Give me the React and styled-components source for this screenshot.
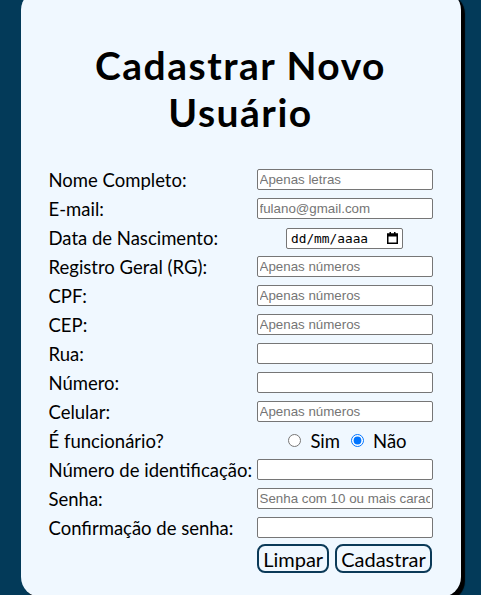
import styled, { createGlobalStyle } from 'styled-components';

const GlobalStyle = createGlobalStyle`
  html, body {
    margin: 0;
    padding: 0;
  }
  body {
    background-color: #033a59;
    font-family: Lato, "Open Sans", sans-serif;
  }
`;

const Page = styled.div`
  display: flex;
  justify-content: center;
`;

const Card = styled.div`
  width: 440px;
  margin-top: -10px;
  padding: 52px 0 24px;
  box-sizing: border-box;
  background-color: #f0f8ff;
  border-radius: 20px;
  box-shadow: 4px 4px 1px #000000;
  display: flex;
  flex-direction: column;
  align-items: center;
`;

const Title = styled.h1`
  margin: 0 0 29px;
  font-size: 39px;
  line-height: 47px;
  letter-spacing: 1.5px;
  font-weight: 700;
  text-align: center;
  color: #000000;
`;

const Table = styled.table`
  border-collapse: collapse;
`;

const LabelCell = styled.td`
  width: 204px;
  height: 29px;
  padding: 0 2px;
  font-size: 18.5px;
  color: #000000;
  white-space: nowrap;
  vertical-align: middle;
`;

const FieldCell = styled.td`
  width: 176px;
  height: 29px;
  padding: 0 2px;
  text-align: center;
  vertical-align: middle;
`;

const TextInput = styled.input`
  display: block;
  width: 176px;
  height: 21px;
  box-sizing: border-box;
  padding: 1px 2px;
  border: 1px solid #767676;
  border-radius: 2px;
  background: #ffffff;
  font-family: Arial, "Liberation Sans", sans-serif;
  font-size: 13.33px;
  &::placeholder {
    color: #757575;
  }
`;

const DateBox = styled.label`
  display: inline-flex;
  align-items: center;
  width: 117px;
  height: 21px;
  box-sizing: border-box;
  padding: 0 4px 0 4px;
  border: 1px solid #767676;
  border-radius: 2px;
  background: #ffffff;
  vertical-align: middle;
`;

const DateText = styled.input`
  flex: 1;
  min-width: 0;
  padding: 0;
  border: none;
  outline: none;
  background: transparent;
  font-family: "DejaVu Sans Mono", "Liberation Mono", monospace;
  font-size: 12.8px;
  &::placeholder {
    color: #000000;
  }
`;

const RadioGroup = styled.div`
  display: inline-flex;
  align-items: center;
  gap: 11px;
  font-size: 18.5px;
  padding-left: 6px;
`;

const RadioOption = styled.label`
  display: inline-flex;
  align-items: center;
  gap: 9px;
`;

const Radio = styled.input`
  margin: 0;
  width: 13px;
  height: 13px;
`;

const Actions = styled.div`
  display: flex;
  justify-content: center;
  gap: 6px;
  padding-top: 2px;
`;

const Button = styled.button`
  height: 29px;
  padding: 0 4px;
  border: 2px solid #0b3a58;
  border-radius: 8px;
  background-color: #f0f8ff;
  color: #000000;
  font-family: Lato, "Open Sans", sans-serif;
  font-size: 20px;
  line-height: 1;
`;

const fields = [
  { label: 'Nome Completo:', placeholder: 'Apenas letras' },
  { label: 'E-mail:', placeholder: 'fulano@gmail.com' },
  { label: 'Data de Nascimento:', type: 'date' },
  { label: 'Registro Geral (RG):', placeholder: 'Apenas números' },
  { label: 'CPF:', placeholder: 'Apenas números' },
  { label: 'CEP:', placeholder: 'Apenas números' },
  { label: 'Rua:' },
  { label: 'Número:' },
  { label: 'Celular:', placeholder: 'Apenas números' },
  { label: 'É funcionário?', type: 'radio' },
  { label: 'Número de identificação:' },
  { label: 'Senha:', placeholder: 'Senha com 10 ou mais caracteres' },
  { label: 'Confirmação de senha:', type: 'password' },
];

function CalendarIcon() {
  return (
    <svg width="11" height="12" viewBox="0 0 11 12" fill="none">
      <rect x="0.75" y="2" width="9.5" height="9.25" stroke="#000" strokeWidth="1.5" />
      <rect x="0" y="2" width="11" height="2.5" fill="#000" />
      <rect x="2.5" y="0" width="1.5" height="2" fill="#000" />
      <rect x="7" y="0" width="1.5" height="2" fill="#000" />
    </svg>
  );
}

function Field({ field }) {
  if (field.type === 'date') {
    return (
      <DateBox>
        <DateText type="text" placeholder="dd/mm/aaaa" />
        <CalendarIcon />
      </DateBox>
    );
  }
  if (field.type === 'radio') {
    return (
      <RadioGroup>
        <RadioOption>
          <Radio type="radio" name="funcionario" value="sim" />
          Sim
        </RadioOption>
        <RadioOption>
          <Radio type="radio" name="funcionario" value="nao" defaultChecked />
          Não
        </RadioOption>
      </RadioGroup>
    );
  }
  if (field.type === 'password') {
    return <TextInput type="password" />;
  }
  return <TextInput type="text" placeholder={field.placeholder} />;
}

function App() {
  return (
    <Page>
      <GlobalStyle />
      <Card>
        <Title>
          Cadastrar Novo
          <br />
          Usuário
        </Title>
        <form onSubmit={(e) => e.preventDefault()}>
          <Table>
            <tbody>
              {fields.map((field) => (
                <tr key={field.label}>
                  <LabelCell>{field.label}</LabelCell>
                  <FieldCell>
                    <Field field={field} />
                  </FieldCell>
                </tr>
              ))}
              <tr>
                <LabelCell />
                <FieldCell>
                  <Actions>
                    <Button type="reset">Limpar</Button>
                    <Button type="submit">Cadastrar</Button>
                  </Actions>
                </FieldCell>
              </tr>
            </tbody>
          </Table>
        </form>
      </Card>
    </Page>
  );
}

export default App;
